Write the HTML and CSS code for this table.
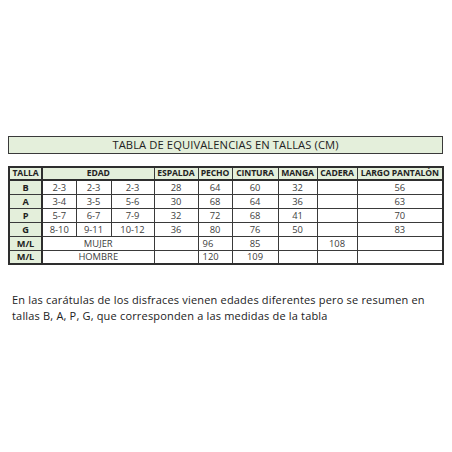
FILE: index.html
```html
<!DOCTYPE html>
<html lang="es">
<head>
<meta charset="utf-8">
<link rel="stylesheet" href="styles.css">
</head>
<body>
<div class="page">
  <div class="title">TABLA DE EQUIVALENCIAS EN TALLAS (CM)</div>
  <table class="sizes">
    <colgroup>
      <col class="c1"><col class="c2"><col class="c3"><col class="c4"><col class="c5"><col class="c6"><col class="c7"><col class="c8"><col class="c9"><col class="c10">
    </colgroup>
    <tr class="head">
      <th class="lbl">TALLA</th>
      <th colspan="3">EDAD</th>
      <th>ESPALDA</th>
      <th>PECHO</th>
      <th>CINTURA</th>
      <th>MANGA</th>
      <th>CADERA</th>
      <th>LARGO PANTALÓN</th>
    </tr>
    <tr><th class="lbl">B</th><td>2-3</td><td>2-3</td><td>2-3</td><td>28</td><td>64</td><td>60</td><td>32</td><td></td><td>56</td></tr>
    <tr><th class="lbl">A</th><td>3-4</td><td>3-5</td><td>5-6</td><td>30</td><td>68</td><td>64</td><td>36</td><td></td><td>63</td></tr>
    <tr><th class="lbl">P</th><td>5-7</td><td>6-7</td><td>7-9</td><td>32</td><td>72</td><td>68</td><td>41</td><td></td><td>70</td></tr>
    <tr><th class="lbl">G</th><td>8-10</td><td>9-11</td><td>10-12</td><td>36</td><td>80</td><td>76</td><td>50</td><td></td><td>83</td></tr>
    <tr><th class="lbl">M/L</th><td colspan="3">MUJER</td><td></td><td class="left">96</td><td>85</td><td></td><td>108</td><td></td></tr>
    <tr><th class="lbl">M/L</th><td colspan="3">HOMBRE</td><td></td><td class="left">120</td><td>109</td><td></td><td></td><td></td></tr>
  </table>
  <p class="note">En las carátulas de los disfraces vienen edades diferentes pero se resumen en tallas B, A, P, G, que corresponden a las medidas de la tabla</p>
</div>
</body>
</html>
```

FILE: styles.css
```css
html, body {
  margin: 0;
  padding: 0;
  background: #ffffff;
}

.page {
  width: 452px;
  height: 452px;
  padding: 136px 0 0 8px;
  box-sizing: border-box;
  font-family: "Open Sans", "Liberation Sans", sans-serif;
  color: #2a2a2a;
}

.title {
  width: 435px;
  height: 18px;
  box-sizing: border-box;
  border: 1.5px solid #3a3a3a;
  background: #e4efdb;
  font-size: 11.2px;
  line-height: 15px;
  text-align: center;
  color: #222;
  letter-spacing: 0.1px;
}

.sizes {
  margin-top: 12px;
  width: 434px;
  border-collapse: collapse;
  table-layout: fixed;
  border: 2px solid #2e2e2e;
  font-size: 9.4px;
}

.c1 { width: 33px; }
.c2 { width: 34px; }
.c3 { width: 35px; }
.c4 { width: 43px; }
.c5 { width: 44px; }
.c6 { width: 34px; }
.c7 { width: 46px; }
.c8 { width: 39px; }
.c9 { width: 40px; }
.c10 { width: 86px; }

.sizes tr {
  height: 14px;
}

.sizes tr.head {
  height: 13px;
}

.sizes th,
.sizes td {
  border: 1px solid #3a3a3a;
  padding: 0;
  line-height: 11px;
  text-align: center;
  white-space: nowrap;
  overflow: hidden;
}

.sizes td {
  color: #404040;
  font-weight: 400;
}

.sizes th {
  font-weight: 700;
  color: #222;
  background: #e4efdb;
  font-size: 8.6px;
  letter-spacing: -0.1px;
}

.sizes .head th {
  border-bottom: 2px solid #2e2e2e;
}

.sizes .lbl {
  border-right: 2px solid #2e2e2e;
  font-size: 9.2px;
}

.sizes .head th.lbl {
  font-size: 8.6px;
}

.sizes td.left {
  text-align: left;
  padding-left: 4px;
}

.note {
  margin: 27px 0 0 4px;
  width: 420px;
  font-size: 11px;
  letter-spacing: 0.18px;
  line-height: 16px;
  color: #222;
}
```
